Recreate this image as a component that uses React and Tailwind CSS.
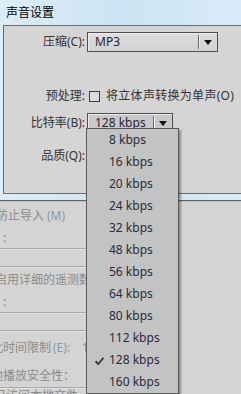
import React from 'react';

const FONT = "font-['Noto_Sans','Noto_Sans_CJK_SC',sans-serif]";

const rates = [8, 16, 20, 24, 32, 48, 56, 64, 80, 112, 128, 160];

const Arrow = () => (
  <svg width="8" height="5" viewBox="0 0 8 5" className="block">
    <path d="M0 0 H8 L4 5 Z" fill="#111" />
  </svg>
);

const Combo = ({ value, width, pressed }) => (
  <div
    className={`flex items-center h-[20px] border border-[#4f4f4f] ${
      pressed ? 'bg-[#c9c9c9]' : 'bg-gradient-to-b from-[#dedede] to-[#d2d2d2]'
    } shadow-[inset_1px_1px_0_#ececec]`}
    style={{ width }}
  >
    <span className="flex-1 pl-[7px] text-[#24243a] leading-none">{value}</span>
    <span className="w-px h-[14px] bg-[#6a6a6a] shadow-[1px_0_0_#f0f0f0]" />
    <span className="w-[18px] flex justify-center">
      <Arrow />
    </span>
  </div>
);

const Row = ({ label, children, className }) => (
  <div className={`flex items-center ${className}`}>
    <div className="w-[82px] text-right text-[#333] pr-[1px]">{label}</div>
    {children}
  </div>
);

const Rule = ({ className }) => (
  <div className={`w-[90px] h-px bg-[#a9a9a9] shadow-[0_1px_0_#e2e2e2] ${className}`} />
);

const BackText = ({ children, className }) => (
  <div className={`h-[22px] flex items-center text-[#8b8b8b] whitespace-nowrap ${className}`}>{children}</div>
);

export default function App() {
  return (
    <div className={`relative w-[241px] h-[394px] overflow-hidden bg-[#d4d4d4] text-[12px] ${FONT}`}>
      {/* sound settings dialog */}
      <div className="bg-gradient-to-r from-[#dcedf9] via-[#cde4f4] to-[#d8ebf8] pl-[3px] pb-[6px] shadow-[0_1px_1px_rgba(0,0,0,0.55)]">
        <div className="h-[25px] flex items-center pl-[3px] text-black">声音设置</div>
        <div className="h-[169px] bg-[#d5d5d5] border border-r-0 border-[#6c6c6c] pt-[6px]">
          <Row label="压缩(C):">
            <div className="ml-[1px]">
              <Combo value="MP3" width={131} />
            </div>
          </Row>
          <Row label="预处理:" className="mt-[35px]">
            <span className="ml-[3px] w-[11px] h-[11px] border border-[#3c3c3c] bg-[#dcdcdc]" />
            <span className="ml-[6px] text-[#333] whitespace-nowrap tracking-[0.3px]">将立体声转换为单声(O)</span>
          </Row>
          <Row label="比特率(B):" className="mt-[8px]">
            <div className="ml-[1px]">
              <Combo value="128 kbps" width={86} pressed />
            </div>
          </Row>
          <Row label="品质(Q):" className="mt-[14px]">
            <span />
          </Row>
        </div>
      </div>

      {/* publish settings behind */}
      <div className="pt-[5px]">
        <BackText className="ml-[-4px]">
          防止导入 <span className="ml-[3px] text-[#8d98a8]">(M)</span>
        </BackText>
        <BackText className="ml-[3px]">:</BackText>
        <Rule className="mt-[-1px]" />
        <Rule className="mt-[17px]" />
        <BackText className="ml-[-5px] mt-[2px]">启用详细的遥测数据</BackText>
        <BackText className="ml-[3px]">:</BackText>
        <Rule className="mt-[-1px]" />
        <Rule className="mt-[17px]" />
        <BackText className="ml-[-9px] mt-[6px]">
          此时间限制 <span className="ml-[2px] text-[#8d98a8]">(E):</span>
          <span className="ml-[12px]">15</span>
        </BackText>
        <BackText className="ml-[-9px] mt-[6px]">地播放安全性：</BackText>
        <Rule className="mt-[0px]" />
        <BackText className="ml-[-6px] mt-[-3px]">只访问本地文件</BackText>
      </div>

      {/* open dropdown list */}
      <div className="absolute left-[86px] top-[128px] w-[93px] border border-[#5a5a5a] bg-[#c3c3c3] shadow-[2px_2px_2px_rgba(0,0,0,0.35)]">
        {rates.map((r) => (
          <div key={r} className="relative h-[22px] flex items-center pl-[22px] text-[#2a2a3a]">
            {r === 128 && (
              <svg width="9" height="8" viewBox="0 0 9 8" className="absolute left-[8px] top-[8px]">
                <path d="M0.5 4.2 L3.2 7 L8.5 0.8" stroke="#333" strokeWidth="1.8" fill="none" />
              </svg>
            )}
            {r} kbps
          </div>
        ))}
      </div>
    </div>
  );
}
